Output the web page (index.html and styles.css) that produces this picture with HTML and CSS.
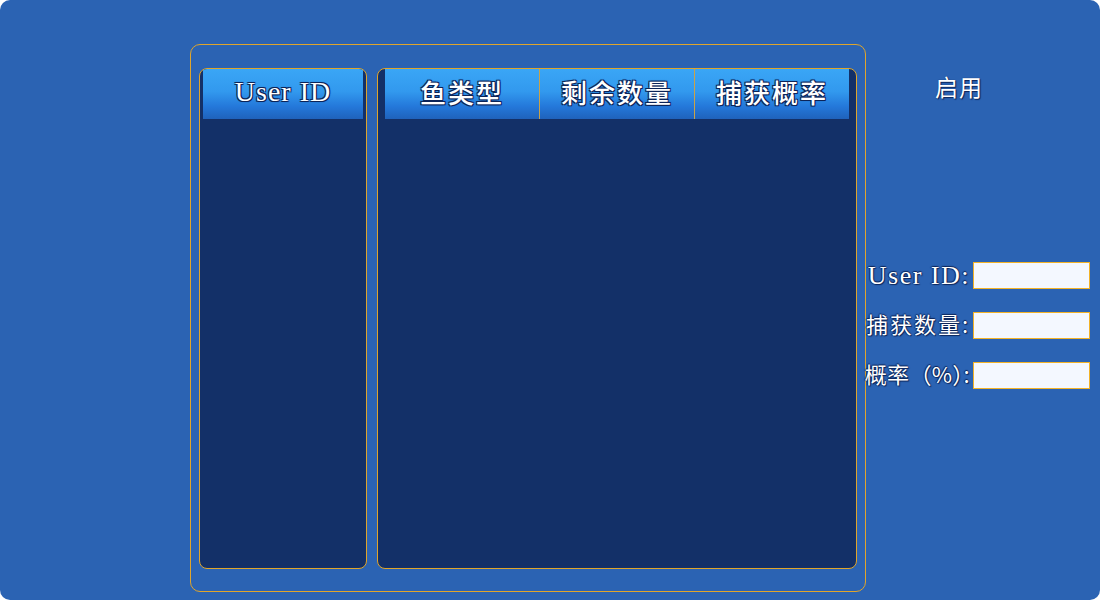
FILE: index.html
```html
<!DOCTYPE html>
<html>
<head>
<meta charset="utf-8">
<link rel="stylesheet" href="styles.css">
</head>
<body>
<div class="app">
  <div class="panel">
    <div class="box box-users">
      <div class="head">
        <div class="cell cell-user">User ID</div>
      </div>
      <div class="body"></div>
    </div>
    <div class="box box-fish">
      <div class="head">
        <div class="cell">鱼类型</div>
        <div class="cell sep">剩余数量</div>
        <div class="cell sep">捕获概率</div>
      </div>
      <div class="body"></div>
    </div>
  </div>
  <div class="side">
    <div class="enable">启用</div>
    <div class="form">
      <div class="row"><span class="label latin">User ID:</span><input class="field" type="text"></div>
      <div class="row"><span class="label">捕获数量:</span><input class="field" type="text"></div>
      <div class="row"><span class="label tight">概率（%<span class="close">）</span>:</span><input class="field" type="text"></div>
    </div>
  </div>
</div>
</body>
</html>
```

FILE: styles.css
```css
html, body {
  margin: 0;
  padding: 0;
  background: #ffffff;
}

.app {
  width: 1100px;
  height: 600px;
  box-sizing: border-box;
  background: #2b63b3;
  border-radius: 10px;
  display: flex;
  padding: 44px 0 0 190px;
  font-family: "Liberation Serif", "Noto Sans CJK SC", serif;
  color: #ffffff;
}

.panel {
  width: 677px;
  height: 548px;
  box-sizing: border-box;
  border: 1px solid #e0a52a;
  border-radius: 10px;
  display: flex;
  gap: 10px;
  padding: 23px 0 0 8px;
}

.box {
  height: 501px;
  box-sizing: border-box;
  border: 1px solid #e0a52a;
  border-radius: 8px;
  background: #133068;
  display: flex;
  flex-direction: column;
  overflow: hidden;
}

.box-users {
  width: 168px;
  padding: 0 3px;
}

.box-fish {
  width: 480px;
  padding: 0 7px;
}

.head {
  display: flex;
  height: 50px;
  flex: none;
}

.cell {
  flex: 1;
  display: flex;
  align-items: center;
  justify-content: center;
  padding-bottom: 6px;
  box-sizing: border-box;
  background: linear-gradient(to bottom, #3aa6f6 0%, #3299ee 45%, #2478da 75%, #1f62bb 100%);
  font-family: "Noto Sans CJK SC", sans-serif;
  font-size: 26px;
  font-weight: 500;
  letter-spacing: 2px;
  color: #ffffff;
  text-shadow: 1px 1px 0 #0c2458, -1px -1px 0 #0c2458, 1px -1px 0 #0c2458, -1px 1px 0 #0c2458, 0 0 2px #0c2458;
}

.cell-user {
  font-family: "Liberation Serif", serif;
  font-size: 28px;
  font-weight: 400;
  letter-spacing: 1px;
  padding-bottom: 4px;
}

.sep {
  border-left: 1px solid #c9a24a;
}

.body {
  flex: 1;
}

.side {
  width: 234px;
  display: flex;
  flex-direction: column;
}

.enable {
  margin: 27px 0 0 69px;
  font-family: "Noto Sans CJK SC", sans-serif;
  font-size: 23px;
  line-height: 30px;
  letter-spacing: 1px;
  text-shadow: 0 0 1px #0c2458, 1px 1px 1px #0c2458;
}

.form {
  margin-top: 161px;
  display: flex;
  flex-direction: column;
  gap: 23px;
  padding-right: 10px;
}

.row {
  display: flex;
  justify-content: flex-end;
  align-items: center;
  height: 27px;
  gap: 3px;
}

.label {
  font-family: "Noto Sans CJK SC", sans-serif;
  font-size: 22px;
  line-height: 27px;
  padding-bottom: 4px;
  letter-spacing: 2px;
  white-space: nowrap;
  text-shadow: 1px 1px 1px #0c2458, -1px 0 1px #0c2458, 0 -1px 1px #0c2458;
}

.label.latin {
  font-family: "Liberation Serif", serif;
  font-size: 26px;
  padding-bottom: 0;
  letter-spacing: 1.5px;
}

.label.tight {
  letter-spacing: 0.3px;
}

.close {
  font-feature-settings: "halt";
}

.field {
  width: 117px;
  height: 27px;
  box-sizing: border-box;
  margin: 0;
  border: 1px solid #f2b227;
  background: #f4f8ff;
  padding: 0 4px;
  outline: none;
}
```
